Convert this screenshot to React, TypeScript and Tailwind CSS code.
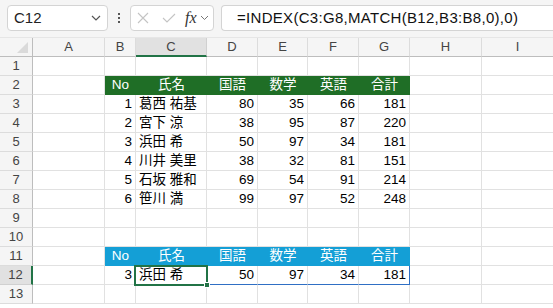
import React from "react";

const colW = [33, 72, 31, 71, 51, 50, 51, 51, 72, 72];
const letters = ["", "A", "B", "C", "D", "E", "F", "G", "H", "I"];

type Cell = { t: string; align?: "l" | "r" | "c" };

const data: (string | number)[][] = [
  [1, "葛西 祐基", 80, 35, 66, 181],
  [2, "宮下 涼", 38, 95, 87, 220],
  [3, "浜田 希", 50, 97, 34, 181],
  [4, "川井 美里", 38, 32, 81, 151],
  [5, "石坂 雅和", 69, 54, 91, 214],
  [6, "笹川 満", 99, 97, 52, 248],
];
const head = ["No", "氏名", "国語", "数学", "英語", "合計"];

const font = { fontFamily: '"Liberation Sans", "Noto Sans CJK JP", sans-serif' };

function rowContent(r: number): { cells: (Cell | null)[]; bg?: string } {
  if (r === 2) return { cells: head.map((h) => ({ t: h, align: "c" })), bg: "bg-[#1f6e26]" };
  if (r === 11) return { cells: head.map((h) => ({ t: h, align: "c" })), bg: "bg-[#149fd6]" };
  if (r >= 3 && r <= 8) {
    const d = data[r - 3];
    return { cells: d.map((v, i) => ({ t: String(v), align: i === 1 ? "l" : "r" })) };
  }
  if (r === 12) {
    const d = data[2];
    return { cells: d.map((v, i) => ({ t: String(v), align: i === 1 ? "l" : "r" })) };
  }
  return { cells: [] };
}

export default function App() {
  const rows = Array.from({ length: 13 }, (_, i) => i + 1);
  return (
    <div className="w-[553px] h-[308px] overflow-hidden bg-white relative" style={font}>
      {/* toolbar */}
      <div className="h-[38px] bg-[#f5f5f5] flex items-start pt-[5px] border-b border-[#e6e6e6]">
        <div className="ml-[7px] w-[101px] h-[26px] bg-white border border-[#d4d4d4] rounded-[4px] flex items-center justify-between pl-[6px] pr-[6px]">
          <span className="text-[15px] text-[#222]">C12</span>
          <svg width="10" height="6" viewBox="0 0 10 6"><path d="M1 1l4 4 4-4" stroke="#555" strokeWidth="1.2" fill="none" /></svg>
        </div>
        <div className="w-[22px] h-[26px] flex flex-col items-center justify-center gap-[2px]">
          <div className="w-[2px] h-[2px] bg-[#555]" />
          <div className="w-[2px] h-[2px] bg-[#555]" />
          <div className="w-[2px] h-[2px] bg-[#555]" />
        </div>
        <div className="w-[84px] h-[26px] bg-white border border-[#d4d4d4] rounded-[4px] flex items-center pl-[6px]">
          <svg width="12" height="12" viewBox="0 0 12 12"><path d="M1 1l10 10M11 1L1 11" stroke="#c4c4c4" strokeWidth="1.1" fill="none" /></svg>
          <svg className="ml-[13px]" width="14" height="10" viewBox="0 0 14 10"><path d="M1 5l4 4 8-8" stroke="#c4c4c4" strokeWidth="1.1" fill="none" /></svg>
          <span className="ml-[9px] text-[16px] italic text-[#333] leading-none" style={{ fontFamily: '"Liberation Serif", serif' }}>fx</span>
          <svg className="ml-[3px]" width="9" height="6" viewBox="0 0 9 6"><path d="M1 1l3.5 3.5L8 1" stroke="#777" strokeWidth="1" fill="none" /></svg>
        </div>
        <div className="ml-[7px] flex-1 h-[26px] bg-white border border-[#d4d4d4] border-r-0 rounded-l-[4px] flex items-center pl-[15px]">
          <span className="text-[15px] text-[#111] tracking-[0.3px]">=INDEX(C3:G8,MATCH(B12,B3:B8,0),0)</span>
        </div>
      </div>

      {/* header row */}
      <div className="flex h-[19px] bg-[#f5f5f5]">
        {colW.map((w, i) => (
          <div
            key={i}
            style={{ width: w }}
            className={
              "shrink-0 h-full flex items-center justify-center text-[13px] text-[#444] " +
              (i === 0
                ? "border-r border-b border-[#bdbdbd] relative"
                : i === 3
                ? "bg-[#e1e1e1] border-r border-[#d0d0d0] border-b-2 border-b-[#217346]"
                : "border-r border-[#dcdcdc] border-b border-b-[#bdbdbd]")
            }
          >
            {i === 0 ? (
              <div className="absolute right-[4px] bottom-[3px] w-0 h-0 border-l-[11px] border-l-transparent border-b-[11px] border-b-[#dadada]" />
            ) : (
              letters[i]
            )}
          </div>
        ))}
      </div>

      {/* rows */}
      {rows.map((r) => {
        const rc = rowContent(r);
        return (
          <div key={r} className="flex h-[19px]">
            <div
              style={{ width: colW[0] }}
              className={
                "shrink-0 h-full flex items-center justify-center text-[13px] text-[#444] border-b " +
                (r === 12
                  ? "bg-[#e1e1e1] border-r-2 border-r-[#217346] border-b-[#d0d0d0]"
                  : "bg-[#f5f5f5] border-r border-r-[#bdbdbd] border-b-[#dcdcdc]")
              }
            >
              {r}
            </div>
            {colW.slice(1).map((w, ci) => {
              const col = ci + 1;
              const inTable = col >= 2 && col <= 7;
              const cell = inTable ? rc.cells[col - 2] : null;
              const isHead = rc.bg && inTable;
              const blueBottom = r === 12 && col >= 4 && col <= 7;
              const blueRight = r === 12 && col === 7;
              let cls = "shrink-0 h-full flex items-center text-[13.5px] overflow-hidden whitespace-nowrap ";
              if (isHead) {
                cls += rc.bg + " text-white ";
              } else {
                cls += "text-black border-r border-b ";
                cls += blueRight ? "border-r-[#2f6fc4] " : "border-r-[#e1e1e1] ";
                cls += blueBottom ? "border-b-[#2f6fc4] " : "border-b-[#e1e1e1] ";
              }
              if (cell) {
                cls +=
                  cell.align === "c"
                    ? "justify-center "
                    : cell.align === "r"
                    ? "justify-end pr-[3px] "
                    : "justify-start pl-[3px] ";
              }
              return (
                <div key={col} style={{ width: w }} className={cls}>
                  {cell ? cell.t : ""}
                </div>
              );
            })}
          </div>
        );
      })}

      {/* selection C12 */}
      <div className="absolute left-[134px] top-[265px] w-[74px] h-[21px] border-2 border-[#217346] pointer-events-none">
        <div className="absolute right-[-4px] bottom-[-4px] w-[6px] h-[6px] bg-[#217346] border border-white" />
      </div>
    </div>
  );
}
